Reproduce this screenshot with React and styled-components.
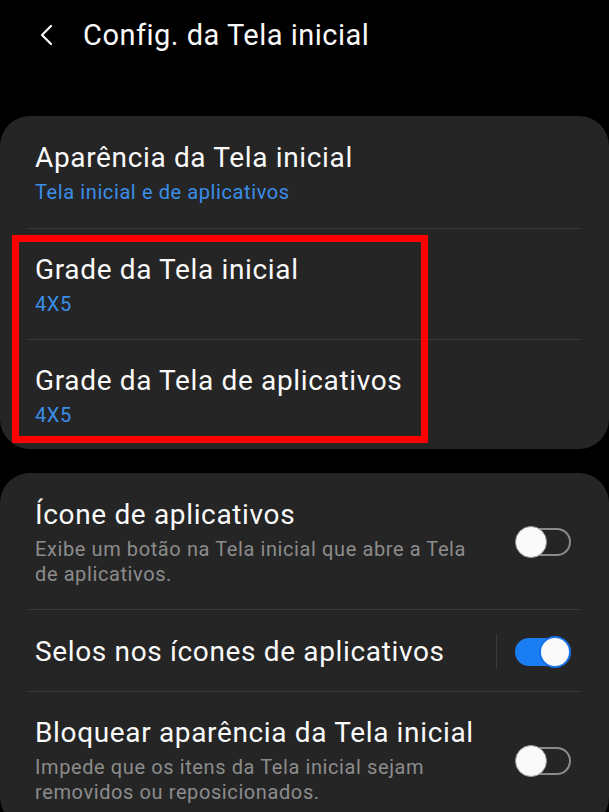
import React from 'react';
import styled, { createGlobalStyle } from 'styled-components';

const GlobalStyle = createGlobalStyle`
  html, body {
    margin: 0;
    padding: 0;
    background: #000;
  }
  body {
    font-family: Roboto, "Noto Sans", "Liberation Sans", sans-serif;
    -webkit-font-smoothing: antialiased;
  }
`;

const Screen = styled.div`
  width: 609px;
  height: 812px;
  overflow: hidden;
  background: #000;
  color: #fafafa;
`;

const Header = styled.header`
  height: 70px;
  display: flex;
  align-items: center;
  padding-left: 38px;
`;

const BackIcon = styled.svg`
  width: 17px;
  height: 24px;
  flex-shrink: 0;
`;

const Title = styled.h1`
  margin: 0 0 0 28px;
  font-size: 29px;
  font-weight: 400;
  letter-spacing: 0.5px;
  color: #fafafa;
`;

const Cards = styled.div`
  padding-top: 46px;
  display: flex;
  flex-direction: column;
  gap: 24px;
`;

const Card = styled.section`
  background: #252525;
  border-radius: 30px;
  padding: 0 29px 0 28px;
`;

const Row = styled.div`
  min-height: ${p => p.h}px;
  display: flex;
  align-items: center;
  padding-left: 7px;
  padding-top: 2px;
  box-sizing: border-box;
  & + & {
    border-top: 1px solid #3a3a3a;
  }
`;

const Highlight = styled.div`
  position: relative;
  border-top: 1px solid #3a3a3a;
`;

const RedBox = styled.div`
  position: absolute;
  left: -16px;
  width: 416px;
  top: 6px;
  bottom: 6px;
  border: 7px solid #ff0000;
  box-sizing: border-box;
  pointer-events: none;
`;

const Texts = styled.div`
  flex: 1;
  min-width: 0;
  padding-right: 32px;
`;

const ItemTitle = styled.div`
  font-size: 28px;
  line-height: 34px;
  letter-spacing: 0.65px;
  color: #fafafa;
  white-space: nowrap;
`;

const Sub = styled.div`
  margin-top: 5px;
  font-size: 20px;
  line-height: 25px;
  letter-spacing: 0.6px;
  color: ${p => (p.accent ? '#3a8ee8' : '#8c8c8c')};
`;

const Control = styled.div`
  display: flex;
  align-items: center;
  flex-shrink: 0;
  padding-right: 9px;
`;

const VLine = styled.div`
  width: 1px;
  height: 35px;
  background: #3a3a3a;
  margin-right: 18px;
`;

const Switch = styled.div`
  position: relative;
  width: 56px;
  height: 32px;
`;

const Track = styled.div`
  position: absolute;
  left: ${p => (p.on ? 0 : 4)}px;
  right: 0;
  top: 2px;
  height: 28px;
  border-radius: 14px;
  box-sizing: border-box;
  background: ${p => (p.on ? '#1a7ef2' : 'transparent')};
  border: 2px solid ${p => (p.on ? '#1a7ef2' : '#8a8a8a')};
`;

const Thumb = styled.div`
  position: absolute;
  top: 0;
  ${p => (p.on ? 'right: 0;' : 'left: 0;')}
  width: 32px;
  height: 32px;
  border-radius: 50%;
  box-sizing: border-box;
  background: #fafafa;
  border: ${p => (p.on ? '2px solid #1670e6' : '1px solid #9a9a9a')};
`;

const Toggle = ({ on }) => (
  <Switch>
    <Track on={on ? 1 : 0} />
    <Thumb on={on ? 1 : 0} />
  </Switch>
);

export default function App() {
  return (
    <Screen>
      <GlobalStyle />
      <Header>
        <BackIcon viewBox="0 0 17 24">
          <path d="M13 3 L4 12 L13 21" fill="none" stroke="#fafafa" strokeWidth="2.2" strokeLinecap="round" strokeLinejoin="round" />
        </BackIcon>
        <Title>Config. da Tela inicial</Title>
      </Header>
      <Cards>
        <Card>
          <Row h={112}>
            <Texts>
              <ItemTitle>Aparência da Tela inicial</ItemTitle>
              <Sub accent>Tela inicial e de aplicativos</Sub>
            </Texts>
          </Row>
          <Highlight>
            <Row h={110}>
              <Texts>
                <ItemTitle>Grade da Tela inicial</ItemTitle>
                <Sub accent>4X5</Sub>
              </Texts>
            </Row>
            <Row h={110}>
              <Texts>
                <ItemTitle>Grade da Tela de aplicativos</ItemTitle>
                <Sub accent>4X5</Sub>
              </Texts>
            </Row>
            <RedBox />
          </Highlight>
        </Card>
        <Card>
          <Row h={136}>
            <Texts>
              <ItemTitle>Ícone de aplicativos</ItemTitle>
              <Sub>Exibe um botão na Tela inicial que abre a Tela de aplicativos.</Sub>
            </Texts>
            <Control>
              <Toggle />
            </Control>
          </Row>
          <Row h={82}>
            <Texts>
              <ItemTitle>Selos nos ícones de aplicativos</ItemTitle>
            </Texts>
            <Control>
              <VLine />
              <Toggle on />
            </Control>
          </Row>
          <Row h={136}>
            <Texts>
              <ItemTitle>Bloquear aparência da Tela inicial</ItemTitle>
              <Sub>Impede que os itens da Tela inicial sejam removidos ou reposicionados.</Sub>
            </Texts>
            <Control>
              <Toggle />
            </Control>
          </Row>
        </Card>
      </Cards>
    </Screen>
  );
}
